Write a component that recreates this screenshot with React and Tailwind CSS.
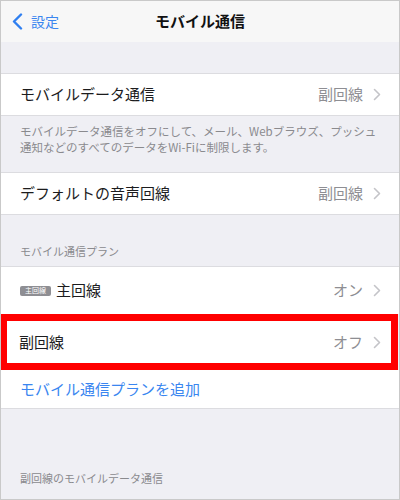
import React from "react";

const font = {
  fontFamily: '"Noto Sans CJK JP", "Noto Sans", "Liberation Sans", sans-serif',
};

const Chevron = () => (
  <svg width="8" height="13" viewBox="0 0 8 13" className="ml-[10px] shrink-0">
    <path
      d="M1.5 1.5 L6.5 6.5 L1.5 11.5"
      fill="none"
      stroke="#c4c4c8"
      strokeWidth="1.6"
      strokeLinecap="round"
      strokeLinejoin="round"
    />
  </svg>
);

const Row = ({ label, value, height = "h-[41px]", badge }) => (
  <div className={`flex items-center bg-white pl-[19px] pr-[18px] ${height}`}>
    {badge && (
      <span className="mr-[5px] flex h-[10px] w-[31px] items-center justify-center rounded-[2px] bg-[#8e8e93] text-[7px] leading-none text-white">
        主回線
      </span>
    )}
    <span className="flex-1 text-[15px] text-[#1c1c1e]">{label}</span>
    <span className="text-[15px] text-[#8e8e93]">{value}</span>
    <Chevron />
  </div>
);

export default function App() {
  return (
    <div
      className="h-[500px] w-[400px] overflow-hidden border border-[#c9c9c9] bg-[#efeff4]"
      style={font}
    >
      {/* nav bar */}
      <div className="grid h-[41px] grid-cols-[1fr_auto_1fr] items-center bg-[#f7f7f7]">
        <div className="flex items-center pl-[11px] text-[#3a86f0]">
          <svg width="11" height="17" viewBox="0 0 11 17">
            <path
              d="M9 1.5 L2 8.5 L9 15.5"
              fill="none"
              stroke="#2f7ff0"
              strokeWidth="2.4"
              strokeLinecap="round"
              strokeLinejoin="round"
            />
          </svg>
          <span className="ml-[8px] text-[14px]">設定</span>
        </div>
        <div className="text-[15px] font-bold text-[#111]">モバイル通信</div>
        <div />
      </div>

      <div className="h-[31px]" />

      <div className="border-y border-[#dcdce0]">
        <Row label="モバイルデータ通信" value="副回線" />
      </div>
      <div className="h-[56px] pl-[19px] pt-[7px] text-[11.5px] leading-[16px] text-[#8a8a8e]">
        モバイルデータ通信をオフにして、メール、Webブラウズ、プッシュ
        <br />
        通知などのすべてのデータをWi-Fiに制限します。
      </div>

      <div className="border-y border-[#dcdce0]">
        <Row label="デフォルトの音声回線" value="副回線" />
      </div>

      <div className="h-[51px] pl-[19px] pt-[29px] text-[11px] leading-[14px] text-[#8a8a8e]">
        モバイル通信プラン
      </div>

      <div className="border-y border-[#dcdce0]">
        <Row label="主回線" value="オン" height="h-[47px]" badge />
        <div className="-ml-px w-[398px] border-[7px] border-[#ff0000] bg-white">
          <div className="flex h-[42px] items-center pl-[12px] pr-[10px]">
            <span className="flex-1 text-[15px] text-[#1c1c1e]">副回線</span>
            <span className="text-[15px] text-[#8e8e93]">オフ</span>
            <Chevron />
          </div>
        </div>
        <div className="flex h-[38px] items-center bg-white pl-[19px] text-[15px] text-[#3a86f0]">
          モバイル通信プランを追加
        </div>
      </div>

      <div className="pl-[19px] pt-[62px] text-[11px] leading-[14px] text-[#8a8a8e]">
        副回線のモバイルデータ通信
      </div>
    </div>
  );
}
